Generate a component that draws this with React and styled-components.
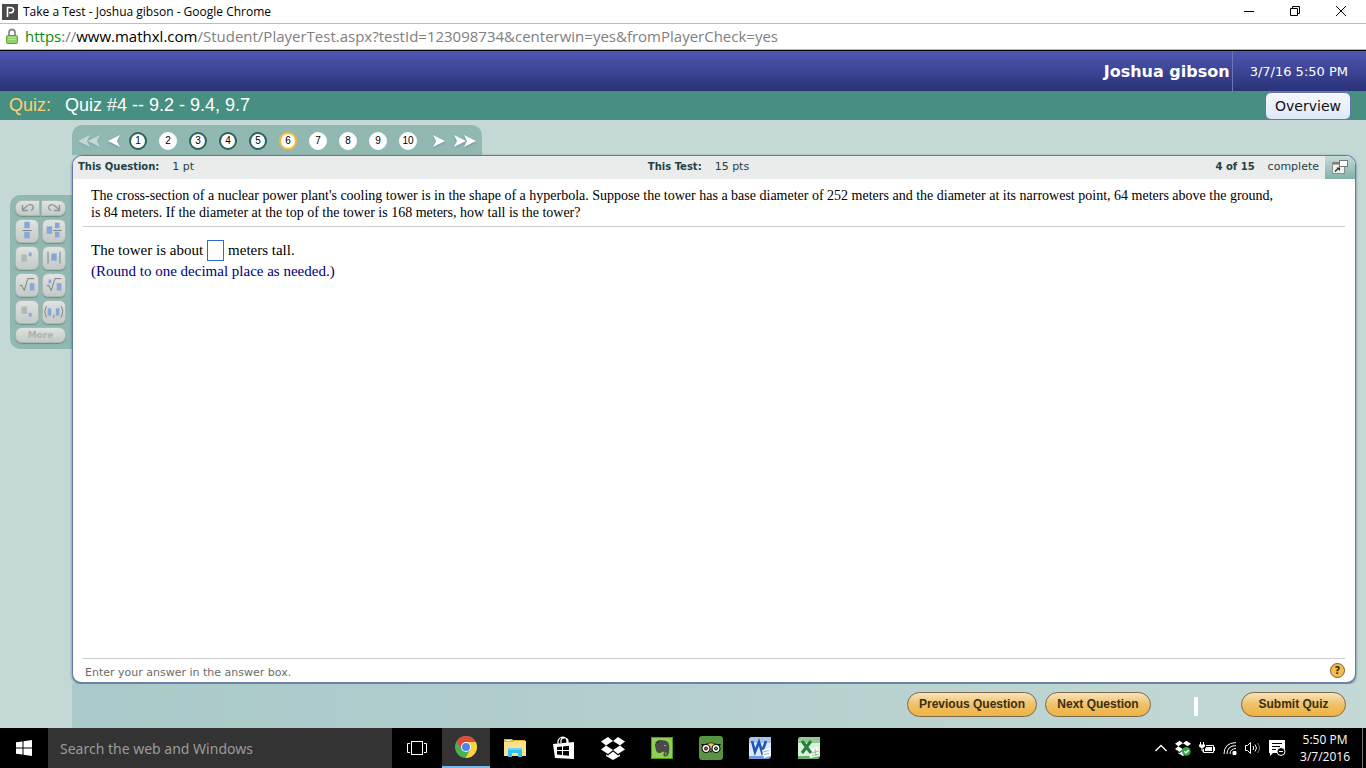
import styled, { createGlobalStyle } from "styled-components";
import { useState } from "react";

const GlobalStyle = createGlobalStyle`
  * {
    box-sizing: border-box;
  }
  body {
    margin: 0;
    font-family: "DejaVu Sans", sans-serif;
    font-size: 11px;
  }
  button,
  input {
    font-family: inherit;
  }
  svg {
    display: block;
  }
`;

const Page = styled.div`
  display: flex;
  flex-direction: column;
  min-height: 100vh;
  background: #c4d9d6;
`;

// browser window
const TitleBar = styled.header`
  display: flex;
  align-items: center;
  height: 24px;
  padding-left: 2px;
  gap: 5px;
  background: #fff;
  border-bottom: 1px solid #bdbdbd;
  font-family: "Open Sans", sans-serif;
  font-size: 12px;
  color: #000;
`;
const WindowTitle = styled.span`
  flex: 1;
`;
const WindowButton = styled.button`
  display: flex;
  align-items: center;
  justify-content: center;
  width: 46px;
  height: 20px;
  padding: 0;
  border: none;
  background: none;
`;
const WindowButtons = styled.div`
  display: flex;
  padding: 0 2px 2px 0;
`;
const AddressBar = styled.div`
  display: flex;
  align-items: center;
  height: 27px;
  padding: 0 0 2px 6px;
  gap: 7px;
  background: #fff;
  border-bottom: 1px solid #000;
  box-shadow: inset 0 -1px 0 #b5b5b5;
  font-family: "Open Sans", sans-serif;
  font-size: 15px;
  color: #808080;
`;
const Secure = styled.span`
  color: #0b8a0b;
`;
const Host = styled.span`
  color: #000;
`;

// top of the player
const Banner = styled.div`
  display: flex;
  justify-content: flex-end;
  align-items: center;
  height: 40px;
  padding-right: 18px;
  background: linear-gradient(#4f57b2, #3c4496 50%, #2a3278);
  color: #fff;
`;
const UserName = styled.span`
  padding-right: 2px;
  font-size: 16px;
  font-weight: bold;
`;
const BannerDate = styled.span`
  display: flex;
  align-items: center;
  height: 40px;
  padding-left: 17px;
  border-left: 1px solid #6d74bb;
  font-size: 13px;
`;
const QuizBar = styled.div`
  display: flex;
  align-items: center;
  height: 29px;
  padding: 0 15px 0 9px;
  gap: 14px;
  background: #478f80;
  font-family: "Liberation Sans", sans-serif;
  font-size: 18px;
  color: #fff;
`;
const QuizLabel = styled.span`
  color: #ffd078;
`;
const QuizName = styled.span`
  flex: 1;
`;
const OverviewButton = styled.button`
  width: 86px;
  height: 28px;
  padding: 0;
  border: 1px solid #6275b0;
  border-radius: 6px;
  background: linear-gradient(#f6f9fe, #dfe8f8);
  font-family: "DejaVu Sans", sans-serif;
  font-size: 14px;
  color: #111;
`;

// player body
const Body = styled.div`
  display: flex;
  flex: 1;
  padding-top: 5px;
`;
const Side = styled.aside`
  width: 72px;
  padding: 70px 0 0 10px;
`;
const Palette = styled.div`
  display: flex;
  flex-wrap: wrap;
  gap: 3px;
  padding: 5px 6px 6px 5px;
  border-radius: 10px 0 0 10px;
  background: #92b9b1;
`;
const PaletteButton = styled.button`
  display: flex;
  align-items: center;
  justify-content: center;
  width: 24px;
  height: 24px;
  padding: 0;
  border: 1px solid #aab9b4;
  border-radius: 6px;
  background: linear-gradient(#dfe3e1, #c3cac7);
  box-shadow: 0 1px 1px #6f8f88;
`;
const UndoRow = styled.div`
  display: flex;
  width: 51px;
  gap: 1px;
`;
const UndoButton = styled(PaletteButton)`
  flex: 1;
  height: 16px;
  border-radius: ${(p) => (p.$right ? "0 7px 7px 0" : "7px 0 0 7px")};
`;
const MoreButton = styled(PaletteButton)`
  width: 51px;
  height: 16px;
  border-radius: 7px;
  font-size: 9px;
  font-weight: bold;
  color: #abb3b0;
`;

const Main = styled.main`
  display: flex;
  flex-direction: column;
  flex: 1;
  min-width: 0;
`;
const QuestionNav = styled.nav`
  display: flex;
  align-items: center;
  align-self: flex-start;
  height: 30px;
  padding: 2px 6px 0 6px;
  border-radius: 10px 10px 0 0;
  background: #92b9b1;
`;
const ArrowButton = styled.button`
  display: flex;
  align-items: center;
  justify-content: center;
  width: ${(p) => (p.$double ? 22 : 14)}px;
  height: 18px;
  padding: 0;
  border: none;
  background: none;
  color: #fff;
  opacity: ${(p) => (p.disabled ? 0.45 : 1)};
  filter: drop-shadow(0 1px 1px #6a958c);
`;
const Numbers = styled.div`
  display: flex;
  gap: 12px;
  padding: 0 15px 0 8px;
`;
const NumberButton = styled.button`
  width: 18px;
  height: 18px;
  padding: 0;
  border: 2px solid
    ${(p) => (p.$current ? "#f9b934" : p.$done ? "#2b6259" : "#fff")};
  border-radius: 50%;
  background: #fff;
  font-family: "Liberation Sans", sans-serif;
  font-size: 10px;
  line-height: 14px;
  color: #000;
`;
const ArrowGap = styled.span`
  width: ${(p) => p.$size}px;
`;

const PanelArea = styled.div`
  display: flex;
  flex: 1;
  padding-right: 10px;
`;
const Panel = styled.section`
  display: flex;
  flex-direction: column;
  flex: 1;
  border: 1px solid #6078b0;
  border-bottom: 2px solid #6c82ae;
  border-radius: 10px;
  background: #fff;
  box-shadow: 0 1px 3px #5d7a80;
  overflow: hidden;
`;
const PanelHeader = styled.div`
  display: flex;
  height: 23px;
  padding-left: 5px;
  background: #eaeceb;
  color: #1f4147;
`;
const Stats = styled.div`
  display: grid;
  grid-template-columns: 1fr auto 1fr;
  align-items: center;
  flex: 1;
  padding: 0 6px 2px 0;
`;
const Stat = styled.div`
  display: flex;
  align-items: baseline;
  gap: 13px;
  justify-content: ${(p) => (p.$end ? "flex-end" : "flex-start")};
`;
const StatLabel = styled.b`
  font-size: 10px;
`;
const PopOutButton = styled.button`
  display: flex;
  align-items: center;
  justify-content: center;
  width: 30px;
  padding: 0;
  border: none;
  background: linear-gradient(#c5dcd6, #7fb2a8);
`;
const Question = styled.div`
  flex: 1;
  padding: 8px 10px 0;
  font-family: "Liberation Serif", serif;
  color: #000;
`;
const QuestionText = styled.p`
  margin: 0;
  padding: 0 8px 5px;
  border-bottom: 1px solid #ccc;
  font-size: 14px;
  line-height: 17px;
`;
const Answer = styled.div`
  padding: 13px 8px;
  font-size: 15px;
`;
const AnswerLine = styled.label`
  display: flex;
  align-items: center;
  gap: 4px;
`;
const AnswerInput = styled.input`
  width: 17px;
  height: 21px;
  padding: 0;
  border: 1px solid #2f6bc9;
  background: #fff;
  font-size: 14px;
  text-align: center;
`;
const Hint = styled.div`
  line-height: 20px;
  color: #000080;
`;
const PanelFooter = styled.div`
  display: flex;
  align-items: center;
  justify-content: space-between;
  height: 24px;
  margin: 0 10px;
  padding-left: 2px;
  border-top: 1px solid #ccc;
  color: #6b6b6b;
`;
const FooterText = styled.span`
  padding-top: 3px;
`;
const HelpButton = styled.button`
  width: 15px;
  height: 15px;
  padding: 0;
  border: 1px solid #7a5a1c;
  border-radius: 50%;
  background: #f3bd52;
  font-size: 10px;
  font-weight: bold;
  line-height: 13px;
  color: #3a2a08;
`;

const Actions = styled.div`
  display: flex;
  justify-content: flex-end;
  align-items: flex-start;
  height: 44px;
  padding: 8px 20px 0 0;
  background: linear-gradient(to right, #a9cac8, #b0cdcc 35%, #c4d9d6);
`;
const PillButton = styled.button`
  width: ${(p) => p.$width}px;
  height: 25px;
  margin-left: 8px;
  padding: 0 0 2px;
  border: 1px solid #7d6a45;
  border-radius: 13px;
  background: linear-gradient(#f8e3bf, #efc168 50%, #eeb344);
  font-family: "Liberation Sans", sans-serif;
  font-size: 12px;
  font-weight: bold;
  color: #3d2e10;
`;
const Separator = styled.span`
  width: 4px;
  height: 19px;
  margin: 5px 35px 0 43px;
  background: #fff;
`;

// windows taskbar
const Taskbar = styled.footer`
  display: flex;
  height: 40px;
  background: #000;
  font-family: "Open Sans", sans-serif;
  color: #fff;
`;
const TaskButton = styled.button`
  display: flex;
  align-items: center;
  justify-content: center;
  width: ${(p) => p.$width || 49}px;
  padding: 0;
  border: none;
  border-bottom: ${(p) => (p.$active ? "2px solid #76b9ed" : "none")};
  background: ${(p) => (p.$active ? "#333" : "none")};
`;
const SearchInput = styled.input`
  width: 344px;
  padding: 0 12px;
  border: none;
  background: #333;
  font-family: "Noto Sans", sans-serif;
  font-size: 14px;
  color: #fff;
  &::placeholder {
    color: #9b9b9b;
    opacity: 1;
  }
`;
const Tray = styled.div`
  display: flex;
  align-items: center;
  gap: 8px;
  margin-left: auto;
  padding-right: 3px;
`;
const Clock = styled.div`
  margin: 0 4px 0 6px;
  font-size: 12px;
  line-height: 17px;
  text-align: center;
`;
const ShowDesktop = styled.span`
  width: 1px;
  height: 40px;
  background: #777;
`;

const Box = ({ x, y, w, h, gray }) => (
  <rect x={x} y={y} width={w} height={h} fill={gray ? "#b3b9b7" : "#88a6d8"} />
);

const tools = [
  {
    label: "Fraction",
    icon: (
      <>
        <Box x={9} y={2} w={6} h={7} />
        <Box x={9} y={13} w={6} h={7} />
        <path d="M7 11.5h10" stroke="#777" />
      </>
    ),
  },
  {
    label: "Mixed number",
    icon: (
      <>
        <Box x={4} y={7} w={6} h={8} />
        <Box x={13} y={3} w={5} h={6} />
        <Box x={13} y={13} w={5} h={6} />
        <path d="M11 11.5h9" stroke="#777" />
      </>
    ),
  },
  {
    label: "Exponent",
    icon: (
      <>
        <Box x={6} y={8} w={6} h={8} gray />
        <Box x={14} y={6} w={3} h={4} />
      </>
    ),
  },
  {
    label: "Absolute value",
    icon: (
      <>
        <Box x={9} y={7} w={6} h={8} />
        <path d="M5.5 5v13M18.5 5v13" stroke="#777" />
      </>
    ),
  },
  {
    label: "Square root",
    icon: (
      <>
        <Box x={15} y={10} w={5} h={8} />
        <path d="M4 13l2-1 3 6 4-13h7" fill="none" stroke="#777" />
      </>
    ),
  },
  {
    label: "Root",
    icon: (
      <>
        <Box x={15} y={10} w={5} h={8} />
        <Box x={6} y={6} w={3} h={4} />
        <path d="M4 13l2-1 3 6 4-13h7" fill="none" stroke="#777" />
      </>
    ),
  },
  {
    label: "Subscript",
    icon: (
      <>
        <Box x={6} y={6} w={6} h={8} gray />
        <Box x={14} y={13} w={3} h={4} />
      </>
    ),
  },
  {
    label: "Ordered pair",
    icon: (
      <>
        <Box x={5} y={8} w={4} h={8} />
        <Box x={14} y={8} w={4} h={8} />
        <path
          d="M4 5.5q-4 6 0 12.500M19.500 5.500q4 6 0 12.500M12 15v1.500l-1 2"
          fill="none"
          stroke="#777"
        />
      </>
    ),
  },
];

const done = [1, 3, 4, 5];

const PearsonIcon = () => (
  <svg width="16" height="16" viewBox="0 0 16 16">
    <rect width="16" height="16" fill="#4a4a4a" />
    <path
      d="M5.500 13V3.500h3.500q3 .3 2.500 3-.5 2.300-3.500 2.200h-1"
      fill="none"
      stroke="#fff"
      strokeWidth="1.600"
    />
  </svg>
);

const LockIcon = () => (
  <svg width="12" height="16" viewBox="0 0 12 16">
    <path
      d="M3 8V4.500q0-3 3-3t3 3V8"
      fill="none"
      stroke="#8a8a8a"
      strokeWidth="1.800"
    />
    <rect x=".5" y="7.500" width="11" height="8" rx="1" fill="#8fd06b" stroke="#5da33a" />
    <path d="M2 9.500h8M2 11.500h8" stroke="#b5e49a" />
  </svg>
);

const Arrow = ({ left, double }) => (
  <svg
    width={double ? 22 : 12}
    height="14"
    viewBox={double ? "0 0 22 14" : "0 0 12 14"}
  >
    <g
      fill="currentColor"
      transform={left ? `translate(${double ? 22 : 12} 0) scale(-1 1)` : undefined}
    >
      <path d="M0 1l12 6-12 6 3-6z" />
      {double && <path d="M10 1l12 6-12 6 3-6z" />}
    </g>
  </svg>
);

const UndoIcon = ({ flip }) => (
  <svg width="14" height="10" viewBox="0 0 14 10">
    <g transform={flip ? "translate(14 0) scale(-1 1)" : undefined}>
      <path
        d="M2 6.500L6 3q3-2.500 5.500-.5 2 3-1.500 5"
        fill="none"
        stroke="#8c9390"
        strokeWidth="1.300"
      />
      <path d="M1.500 2v5.500H7" fill="none" stroke="#8c9390" strokeWidth="1.300" />
    </g>
  </svg>
);

const PopOutIcon = () => (
  <svg width="16" height="15" viewBox="0 0 16 15">
    <rect x=".5" y="2.500" width="12" height="11" fill="#f1f1ec" stroke="#8d8d86" />
    <path d="M1 3.500h11" stroke="#77776f" strokeWidth="2" />
    <rect x="7.500" y=".5" width="8" height="6" fill="#fff" stroke="#777" />
    <path d="M3 11.500l3-3" stroke="#222" strokeWidth="1.300" />
    <path d="M4.500 7.500H8V11z" fill="#222" />
  </svg>
);

const WindowsIcon = () => (
  <svg width="16" height="16" viewBox="0 0 16 16" fill="#fff">
    <path d="M0 2.300l6.500-.9v6.100H0zM7.500 1.200L16 0v7.500H7.500zM0 8.500h6.500v6.100L0 13.700zM7.500 8.500H16V16l-8.500-1.200z" />
  </svg>
);

const TaskViewIcon = () => (
  <svg width="20" height="14" viewBox="0 0 20 14" fill="none" stroke="#fff">
    <rect x="4.500" y=".5" width="11" height="13" />
    <path d="M3 2.500H.5v9H3M17 2.500h2.500v9H17" />
  </svg>
);

const ChromeIcon = () => (
  <svg width="22" height="22" viewBox="0 0 22 22">
    <circle cx="11" cy="11" r="11" fill="#4caf50" />
    <path d="M11 6h9.800A11 11 0 0 1 10.500 22L15.330 13.500z" fill="#fdd23e" />
    <path d="M1.470 5.500A11 11 0 0 1 20.800 6H11v5l-4.330 2.500z" fill="#e24b3c" />
    <circle cx="11" cy="11" r="5" fill="#fff" />
    <circle cx="11" cy="11" r="4" fill="#4787ed" />
  </svg>
);

const FolderIcon = () => (
  <svg width="22" height="20" viewBox="0 0 22 20">
    <path d="M0 1h8l1 1h12v4H0z" fill="#e8b32e" />
    <path d="M2 2.500h5" stroke="#fff3c0" />
    <path d="M0 4h9l1-1h12v15H0z" fill="#fbe18c" />
    <path d="M4 19v-9h14v9h-4v-4H8v4z" fill="#36bff0" />
    <path d="M4 10h14v2H4z" fill="#67d4f7" />
  </svg>
);

const StoreIcon = () => (
  <svg width="22" height="24" viewBox="0 0 22 24">
    <path
      d="M5 8V5q1-3.500 4.500-4 4 0 4.500 4v2M8 7V4q1-2.500 4-2 3 .5 3 3v2"
      fill="none"
      stroke="#fff"
      strokeWidth="1.200"
    />
    <path d="M0 8l21-2v17L2 22z" fill="#fff" />
    <path
      d="M4 11l5-.5V14H4zM10 10.400l6-.6V14h-6zM4 15h5v4l-5-.5zM10 15h6v4.800l-6-.6z"
      fill="#000"
    />
  </svg>
);

const DropboxIcon = () => (
  <svg width="24" height="24" viewBox="0 0 24 24" fill="#fff">
    <path d="M7 1l5 4-7 4.500L0 5.500zM17 1l7 4.500-5 4L12 5zM0 13.500l5-4 7 4.500-5 4zM19 9.500l5 4-7 4.500-5-4zM5 18.500l2 1 5-4 5 4 2-1V20l-7 4-7-4z" />
  </svg>
);

const EvernoteIcon = () => (
  <svg width="22" height="22" viewBox="0 0 22 22">
    <rect width="22" height="22" fill="#4a9c20" />
    <rect x="1" y="1" width="20" height="20" fill="#8ed052" />
    <path
      d="M4 7l4-4 6 .5 3 1.500q2 4 1 10-1 5-4 4.500-2-.5-1.500-3 .5-1.500 2-1.500v2q-1 1 0 1.500 1-.2 1-3-2 0-4-1-1 2-4 1.500-3-1-3.500-8z"
      fill="#484b48"
    />
    <path d="M4 6h3.500V3z" fill="#303330" />
    <path d="M13 8q2-.5 2.500 1.500-1.500-1-2.500-.5z" fill="#b7e08e" />
  </svg>
);

const TripIcon = () => (
  <svg width="24" height="24" viewBox="0 0 24 24">
    <rect width="24" height="24" rx="3" fill="#589442" />
    <path d="M2 8h4q6-3 12 0h4l-2 3H4z" fill="#111" />
    <path d="M8 8q4-1.500 8 0l-4 5z" fill="#f1c36d" />
    <circle cx="7" cy="12.500" r="4" fill="#fff" stroke="#111" strokeWidth="1.200" />
    <circle cx="17" cy="12.500" r="4" fill="#fff" stroke="#111" strokeWidth="1.200" />
    <circle cx="7" cy="12.500" r="1.500" fill="#e0434a" stroke="#111" />
    <circle cx="17" cy="12.500" r="1.500" fill="#4ba04d" stroke="#111" />
    <path d="M11 15h2l-1 2z" fill="#111" />
  </svg>
);

const WordIcon = () => (
  <svg width="22" height="22" viewBox="0 0 22 22">
    <path d="M2 0h20v19l-2 3H0V2z" fill="#dfeaf9" />
    <path d="M2 0h20v6H0V2z" fill="#a9c5ee" />
    <path
      d="M3 4l3 11 4-10 3 10 4-11"
      fill="none"
      stroke="#1d56b5"
      strokeWidth="2.600"
    />
    <path d="M0 19h22v1l-2 2H0z" fill="#6f9be0" />
    <path d="M13 13l8-2 1 8-7 2z" fill="#fff" />
    <path d="M14 15l6-1.500M15 17.500l5-1" stroke="#91afd8" />
  </svg>
);

const ExcelIcon = () => (
  <svg width="22" height="22" viewBox="0 0 22 22">
    <path d="M2 0h20v19l-2 3H0V2z" fill="#dcefd9" />
    <path d="M2 0h20v6H0V2z" fill="#93c995" />
    <path d="M0 19h22v1l-2 2H0z" fill="#6bb173" />
    <path d="M10 12l10-2 2 9-10 2z" fill="#f4fbf3" />
    <path d="M4 4l9 12M13 4L4 16" fill="none" stroke="#258139" strokeWidth="3" />
    <path d="M13 16l8-2M14 18.500l7-1.500M17 12l1 7" stroke="#96bd96" />
  </svg>
);

const CaretIcon = () => (
  <svg width="12" height="8" viewBox="0 0 12 8">
    <path d="M.5 7L6 1.500 11.500 7" fill="none" stroke="#fff" strokeWidth="1.300" />
  </svg>
);

const DropboxTrayIcon = () => (
  <svg width="16" height="16" viewBox="0 0 24 24">
    <path
      d="M7 1l5 4-7 4.500L0 5.500zM17 1l7 4.500-5 4L12 5zM0 13.500l5-4 7 4.500-5 4zM5 18.500l2 1 5-4 5 4 2-1V20l-7 4-7-4z"
      fill="#fff"
    />
    <circle cx="17" cy="17" r="6.500" fill="#31a83b" />
    <path d="M14 17l2.500 2.500L20.500 15" fill="none" stroke="#fff" strokeWidth="2" />
  </svg>
);

const BatteryIcon = () => (
  <svg width="16" height="12" viewBox="0 0 16 12">
    <path d="M1.500 0v3M4.500 0v3M3 5v4h2" stroke="#fff" fill="none" />
    <path d="M0 2.500h6v2L4 6H2L0 4.500z" fill="#fff" />
    <path d="M7 3.500h7.500v7h-10V7" fill="none" stroke="#fff" />
    <path d="M7 5h6v4H6V7zM15 5h1v4h-1z" fill="#fff" />
  </svg>
);

const WifiIcon = () => (
  <svg width="14" height="14" viewBox="0 0 14 14" fill="none" stroke="#fff">
    <path d="M1 13Q1 2 13 1.500M4 13q0-8 9-8.500M7 13q0-5 6-5.500" />
    <path d="M10 13.500v-3h3v3z" fill="#fff" />
  </svg>
);

const VolumeIcon = () => (
  <svg width="16" height="14" viewBox="0 0 16 14" fill="none" stroke="#fff">
    <path d="M.5 4.500h2l3-3v11l-3-3h-2z" />
    <path d="M8 5q1.500 2 0 4M10 3.500q3 3.500 0 7" />
    <path d="M12.500 2q4 5 0 10" stroke="#777" />
  </svg>
);

const NoticeIcon = () => (
  <svg width="17" height="16" viewBox="0 0 17 16">
    <path d="M0 0h16v13H4l-3 3v-3H0z" fill="#fff" />
    <path d="M3 3.500h10M3 6.500h8M3 9.500h4" stroke="#000" />
    <circle cx="12" cy="11.500" r="4" fill="#000" stroke="#fff" />
    <path d="M10 11.500h4" stroke="#fff" />
  </svg>
);

const apps = [
  { name: "File Explorer", icon: <FolderIcon /> },
  { name: "Store", icon: <StoreIcon /> },
  { name: "Dropbox", icon: <DropboxIcon /> },
  { name: "Evernote", icon: <EvernoteIcon /> },
  { name: "TripAdvisor", icon: <TripIcon /> },
  { name: "Word", icon: <WordIcon /> },
  { name: "Excel", icon: <ExcelIcon /> },
];

const App = () => {
  const [current, setCurrent] = useState(6);
  const [answer, setAnswer] = useState("");
  const [search, setSearch] = useState("");

  const goTo = (n) => {
    setCurrent(Math.min(10, Math.max(1, n)));
  };

  return (
    <Page>
      <GlobalStyle />
      <TitleBar>
        <PearsonIcon />
        <WindowTitle>Take a Test - Joshua gibson - Google Chrome</WindowTitle>
        <WindowButtons>
          <WindowButton aria-label="Minimize">
            <svg width="10" height="10">
              <path d="M0 5.500h10" stroke="#000" />
            </svg>
          </WindowButton>
          <WindowButton aria-label="Restore">
            <svg width="10" height="10" fill="none" stroke="#000">
              <path d="M.5 2.500h7v7h-7zM2.500 2.500v-2h7v7h-2" />
            </svg>
          </WindowButton>
          <WindowButton aria-label="Close">
            <svg width="10" height="10">
              <path d="M0 0l10 10M10 0L0 10" stroke="#000" />
            </svg>
          </WindowButton>
        </WindowButtons>
      </TitleBar>
      <AddressBar>
        <LockIcon />
        <span>
          <Secure>https</Secure>://<Host>www.mathxl.com</Host>
          /Student/PlayerTest.aspx?testId=123098734&amp;centerwin=yes&amp;fromPlayerCheck=yes
        </span>
      </AddressBar>

      <Banner>
        <UserName>Joshua gibson</UserName>
        <BannerDate>3/7/16 5:50 PM</BannerDate>
      </Banner>
      <QuizBar>
        <QuizLabel>Quiz:</QuizLabel>
        <QuizName>Quiz #4 -- 9.2 - 9.4, 9.7</QuizName>
        <OverviewButton>Overview</OverviewButton>
      </QuizBar>

      <Body>
        <Side>
          <Palette>
            <UndoRow>
              <UndoButton aria-label="Undo">
                <UndoIcon />
              </UndoButton>
              <UndoButton $right aria-label="Redo">
                <UndoIcon flip />
              </UndoButton>
            </UndoRow>
            {tools.map((tool) => (
              <PaletteButton key={tool.label} aria-label={tool.label}>
                <svg width="24" height="24" viewBox="0 0 24 24">
                  {tool.icon}
                </svg>
              </PaletteButton>
            ))}
            <MoreButton>More</MoreButton>
          </Palette>
        </Side>

        <Main>
          <QuestionNav>
            <ArrowButton $double disabled aria-label="First">
              <Arrow left double />
            </ArrowButton>
            <ArrowGap $size={7} />
            <ArrowButton
              aria-label="Previous"
              onClick={() => goTo(current - 1)}
            >
              <Arrow left />
            </ArrowButton>
            <Numbers>
              {[1, 2, 3, 4, 5, 6, 7, 8, 9, 10].map((n) => (
                <NumberButton
                  key={n}
                  $current={n === current}
                  $done={done.includes(n)}
                  onClick={() => goTo(n)}
                >
                  {n}
                </NumberButton>
              ))}
            </Numbers>
            <ArrowButton aria-label="Next" onClick={() => goTo(current + 1)}>
              <Arrow />
            </ArrowButton>
            <ArrowGap $size={8} />
            <ArrowButton $double aria-label="Last" onClick={() => goTo(10)}>
              <Arrow double />
            </ArrowButton>
          </QuestionNav>

          <PanelArea>
            <Panel>
              <PanelHeader>
                <Stats>
                  <Stat>
                    <StatLabel>This Question:</StatLabel>
                    <span>1 pt</span>
                  </Stat>
                  <Stat>
                    <StatLabel>This Test:</StatLabel>
                    <span>15 pts</span>
                  </Stat>
                  <Stat $end>
                    <StatLabel>4 of 15</StatLabel>
                    <span>complete</span>
                  </Stat>
                </Stats>
                <PopOutButton aria-label="Pop out">
                  <PopOutIcon />
                </PopOutButton>
              </PanelHeader>
              <Question>
                <QuestionText>
                  The cross-section of a nuclear power plant's cooling tower is
                  in the shape of a hyperbola. Suppose the tower has a base
                  diameter of 252 meters and the diameter at its narrowest
                  point, 64 meters above the ground,
                  <br />
                  is 84 meters. If the diameter at the top of the tower is 168
                  meters, how tall is the tower?
                </QuestionText>
                <Answer>
                  <AnswerLine>
                    The tower is about
                    <AnswerInput
                      value={answer}
                      onChange={(e) => setAnswer(e.target.value)}
                    />
                    meters tall.
                  </AnswerLine>
                  <Hint>(Round to one decimal place as needed.)</Hint>
                </Answer>
              </Question>
              <PanelFooter>
                <FooterText>Enter your answer in the answer box.</FooterText>
                <HelpButton aria-label="Help">?</HelpButton>
              </PanelFooter>
            </Panel>
          </PanelArea>

          <Actions>
            <PillButton $width={130} onClick={() => goTo(current - 1)}>
              Previous Question
            </PillButton>
            <PillButton $width={106} onClick={() => goTo(current + 1)}>
              Next Question
            </PillButton>
            <Separator />
            <PillButton $width={105}>Submit Quiz</PillButton>
          </Actions>
        </Main>
      </Body>

      <Taskbar>
        <TaskButton $width={48} aria-label="Start">
          <WindowsIcon />
        </TaskButton>
        <SearchInput
          aria-label="Search"
          placeholder="Search the web and Windows"
          value={search}
          onChange={(e) => setSearch(e.target.value)}
        />
        <TaskButton $width={50} aria-label="Task view">
          <TaskViewIcon />
        </TaskButton>
        <TaskButton $width={48} $active aria-label="Chrome">
          <ChromeIcon />
        </TaskButton>
        {apps.map((app) => (
          <TaskButton key={app.name} aria-label={app.name}>
            {app.icon}
          </TaskButton>
        ))}
        <Tray>
          <CaretIcon />
          <DropboxTrayIcon />
          <BatteryIcon />
          <WifiIcon />
          <VolumeIcon />
          <NoticeIcon />
          <Clock>
            <div>5:50 PM</div>
            <div>3/7/2016</div>
          </Clock>
          <ShowDesktop />
        </Tray>
      </Taskbar>
    </Page>
  );
};

export default App;
